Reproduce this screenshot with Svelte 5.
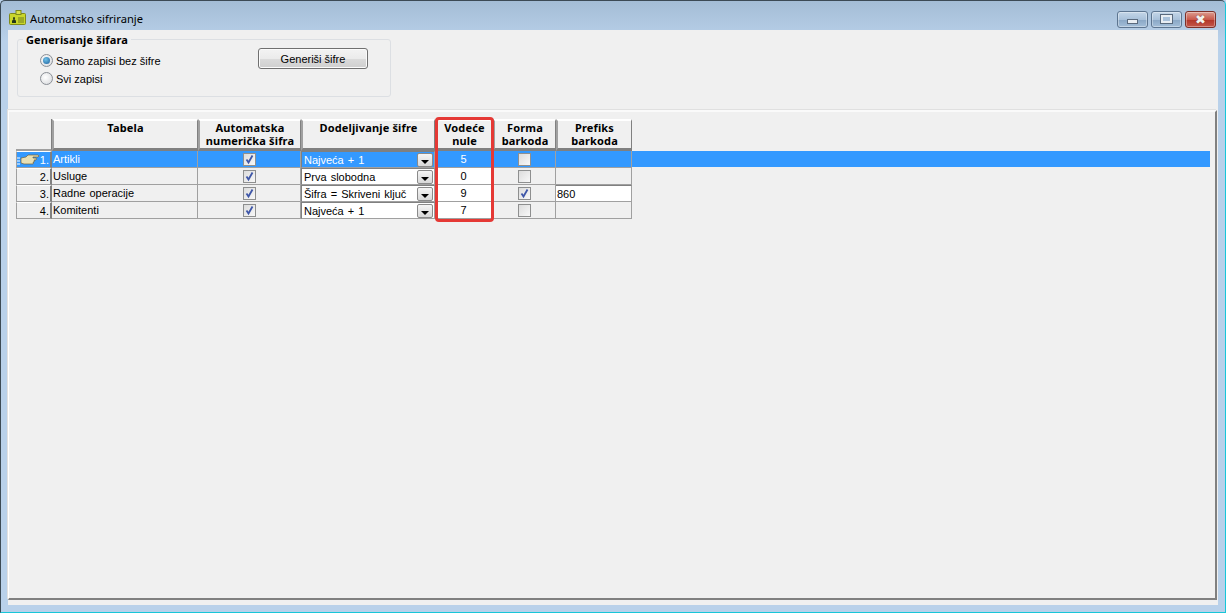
<script>
  // automatic code assignment dialog
  const rows = [
    { no: '1.', name: 'Artikli', auto: true, mode: 'Najveća + 1', zeros: 5, form: false, prefix: '', selected: true },
    { no: '2.', name: 'Usluge', auto: true, mode: 'Prva slobodna', zeros: 0, form: false, prefix: '' },
    { no: '3.', name: 'Radne operacije', auto: true, mode: 'Šifra = Skriveni ključ', zeros: 9, form: true, prefix: '860' },
    { no: '4.', name: 'Komitenti', auto: true, mode: 'Najveća + 1', zeros: 7, form: false, prefix: '' }
  ];
</script>

<div class="window">
  <div class="titlebar">
    <svg class="app-icon" width="18" height="16" viewBox="0 0 18 16">
      <rect x="0.5" y="3.5" width="16" height="11" rx="1" fill="#c9d62c" stroke="#7f8a1a"/>
      <rect x="7" y="0.5" width="5" height="4" fill="#d8e04a" stroke="#7f8a1a"/>
      <path d="M3 13 v-2 q0-1 1.500-1.500 q-1-1 0-2.500 h1 q1 1.500 0 2.500 q1.500 .5 1.500 1.500 v2z" fill="#23351a"/>
      <path d="M9 8h6M9 10h6M9 12h6" stroke="#6f7d20"/>
    </svg>
    <span class="title">Automatsko sifriranje</span>
    <div class="controls">
      <div class="ctl"><span class="min-glyph"></span></div>
      <div class="ctl"><span class="max-glyph"></span></div>
      <div class="ctl close"><span class="x-glyph">✖</span></div>
    </div>
  </div>

  <div class="body">
    <div class="top">
      <fieldset class="group">
        <legend>Generisanje šifara</legend>
        <div class="options">
          <label class="radio"><span class="dot on"></span>Samo zapisi bez šifre</label>
          <label class="radio"><span class="dot"></span>Svi zapisi</label>
        </div>
        <button class="generate">Generiši šifre</button>
      </fieldset>
    </div>

    <div class="grid-panel">
      <div class="grid">
        <div class="head corner"></div>
        <div class="head">Tabela</div>
        <div class="head">Automatska<br />numerička šifra</div>
        <div class="head">Dodeljivanje šifre</div>
        <div class="head">Vodeće<br />nule</div>
        <div class="head">Forma<br />barkoda</div>
        <div class="head">Prefiks<br />barkoda</div>

        {#each rows as row}
          <div class="cell rowhead" class:sel={row.selected}>
            {#if row.selected}
              <svg class="hand" width="24" height="14" viewBox="0 0 24 14">
                <path d="M0 5h3M0 8h3M0 11h3" stroke="#fff"/>
                <path d="M4 5 l5-1 l2-2 h10 q2 1 0 2 h-5 v1 h3 q1 1 0 2 h-2 q1 1 0 2 h-1 q1 1 0 2 h-9 l-3-1z" fill="#e8dfb4" stroke="#6e6140" stroke-width="0.7"/>
              </svg>
            {/if}
            {row.no}
          </div>
          <div class="cell text" class:sel={row.selected}>{row.name}</div>
          <div class="cell center" class:sel={row.selected}>
            <span class="check" class:checked={row.auto}>
              {#if row.auto}<svg width="11" height="11" viewBox="0 0 11 11"><path d="M2.500 5.500 L4.500 8.500 L8.500 1.500" fill="none" stroke="#3f57a8" stroke-width="1.800"/></svg>{/if}
            </span>
          </div>
          <div class="cell combo" class:sel={row.selected}>
            <span class="combo-text">{row.mode}</span>
            <span class="combo-btn"><i></i></span>
          </div>
          <div class="cell zeros" class:sel={row.selected}>{row.zeros}</div>
          <div class="cell center" class:sel={row.selected}>
            <span class="check" class:checked={row.form}>
              {#if row.form}<svg width="11" height="11" viewBox="0 0 11 11"><path d="M2.500 5.500 L4.500 8.500 L8.500 1.500" fill="none" stroke="#3f57a8" stroke-width="1.800"/></svg>{/if}
            </span>
          </div>
          <div class="cell prefix" class:sel={row.selected} class:filled={row.prefix}>{row.prefix}</div>
          {#if row.selected}<div class="sel-tail"></div>{/if}
        {/each}

        <div class="highlight"></div>
      </div>
    </div>
  </div>
</div>

<style>
  :global(body) {
    margin: 0;
    background: #b9d1ea;
  }

  .window {
    width: 1226px;
    height: 613px;
    box-sizing: border-box;
    display: flex;
    flex-direction: column;
    border: 1px solid #3c4a55;
    border-bottom-color: #17c6d8;
    border-right-color: #17c6d8;
    border-radius: 5px 5px 0 0;
    background: linear-gradient(#a4bdd6 0, #b9d1ea 40px);
    font-family: "Liberation Sans", Tahoma, sans-serif;
    font-size: 11px;
    color: #000;
  }

  .titlebar {
    height: 29px;
    flex: none;
    display: flex;
    align-items: center;
    padding-left: 8px;
  }

  .app-icon {
    margin-right: 3px;
    margin-top: 5px;
  }

  .title {
    font-family: "Noto Sans", sans-serif;
    font-size: 11.2px;
    margin-top: 6px;
  }

  .controls {
    margin-left: auto;
    margin-right: 9px;
    margin-top: 7px;
    display: flex;
    gap: 3px;
  }

  .ctl {
    width: 29px;
    height: 15px;
    border: 1px solid #5d7590;
    border-radius: 3px;
    display: flex;
    align-items: center;
    justify-content: center;
    background: linear-gradient(#c4d6e8 0, #a9c1da 50%, #8ba8c6 55%, #a3bed8 100%);
    box-shadow: inset 0 0 0 1px rgba(255, 255, 255, 0.35);
  }

  .ctl.close {
    width: 29px;
    border-color: #7c2f28;
    background: linear-gradient(#dc9d90 0, #c9594b 50%, #b3372a 55%, #c4574a 100%);
  }

  .min-glyph {
    width: 9px;
    height: 3px;
    margin-top: 5px;
    background: #e9eef3;
    border: 1px solid #5a6a7d;
  }

  .max-glyph {
    width: 7px;
    height: 4px;
    border: 2px solid #e9eef3;
    outline: 1px solid #5a6a7d;
    outline-offset: 0;
    background: #a9c1da;
  }

  .x-glyph {
    color: #f2f2ee;
    font-size: 13px;
    line-height: 1;
    font-family: "DejaVu Sans", sans-serif;
    text-shadow: 0 0 1px #6b2018;
  }

  .body {
    flex: 1;
    margin: 0 7px 7px 7px;
    display: flex;
    flex-direction: column;
    background: #f0f0f0;
    min-height: 0;
  }

  .top {
    height: 80px;
    flex: none;
    box-sizing: border-box;
    padding: 3px 0 0 9px;
  }

  .group {
    position: relative;
    width: 372px;
    height: 61px;
    box-sizing: content-box;
    margin: 1px 0 0 0;
    padding: 0;
    border: 1px solid #dcdfe3;
    border-radius: 3px;
    display: flex;
  }

  legend {
    font-weight: bold;
    margin-left: 5px;
    padding: 0 3px;
    line-height: 11px;
    font-size: 11px;
    font-family: "Noto Sans", sans-serif;
    letter-spacing: 0.15px;
  }

  .options {
    display: flex;
    flex-direction: column;
    gap: 5px;
    padding: 9px 0 0 22px;
  }

  .radio {
    display: flex;
    align-items: center;
    gap: 3px;
    height: 13px;
  }

  .dot {
    width: 11px;
    height: 11px;
    border-radius: 50%;
    border: 1px solid #8a8f96;
    background: radial-gradient(circle at 40% 40%, #fff, #d5d7da);
    position: relative;
  }

  .dot.on::after {
    content: "";
    position: absolute;
    inset: 2px;
    border-radius: 50%;
    background: radial-gradient(circle at 40% 35%, #6fc1e8, #1c5f9c);
  }

  .generate {
    position: absolute;
    left: 240px;
    top: 3px;
    width: 110px;
    height: 21px;
    padding: 0;
    border: 1px solid #707070;
    border-radius: 3px;
    background: linear-gradient(#f3f3f3 0, #ebebeb 50%, #dadada 55%, #cfcfcf 100%);
    box-shadow: inset 0 0 0 1px #fbfbfb;
    font: inherit;
    color: #000;
  }

  .grid-panel {
    flex: 1;
    min-height: 0;
    margin-bottom: 5px;
    margin-right: 1px;
    box-sizing: border-box;
    border-top: 2px solid #fafafa;
    border-left: 1px solid #fff;
    border-right: 2px solid #808080;
    border-bottom: 2px solid #808080;
    padding: 7px 0 0 7px;
    position: relative;
    box-shadow: -1px -1px 0 #e0e0e0;
  }

  .grid {
    position: relative;
    display: grid;
    grid-template-columns: 36px 146px 103px 134px 58px 63px 76px;
    grid-template-rows: 32px repeat(4, 17px);
    width: max-content;
  }

  .head {
    box-sizing: border-box;
    border-left: 2px solid #a0a0a0;
    border-top: 2px solid #fff;
    border-right: 1px solid #808080;
    border-bottom: 3px solid #808080;
    font-family: "Noto Sans", sans-serif;
    font-weight: bold;
    letter-spacing: 0.15px;
    text-align: center;
    line-height: 13px;
    padding-top: 0;
    margin-top: 0;
    background: #f0f0f0;
    overflow: hidden;
  }

  .corner {
    border: none;
    border-bottom: 2px solid #a0a0a0;
    border-right: 1px solid #808080;
  }

  .cell {
    box-sizing: border-box;
    border-right: 1px solid #a0a0a0;
    border-bottom: 1px solid #a0a0a0;
    display: flex;
    align-items: center;
    white-space: nowrap;
    position: relative;
    min-width: 0;
    word-spacing: 1px;
  }

  .cell.sel {
    background: #3399ff;
    color: #fff;
  }

  .rowhead {
    justify-content: flex-end;
    padding-right: 1px;
    background: #f0f0f0;
    border-left: 1px solid #a0a0a0;
    border-top: 1px solid #fff;
    border-right: 2px solid #808080;
  }

  .hand {
    position: absolute;
    left: 0;
    top: 1px;
  }

  .text {
    padding-left: 1px;
  }

  .center {
    justify-content: center;
  }

  .check {
    width: 11px;
    height: 11px;
    border: 1px solid #8e8f8f;
    background: linear-gradient(135deg, #dcdcdc, #f8f8f8);
    display: flex;
  }

  .combo {
    padding-left: 2px;
    background: #fff;
    border-left: 1px solid #808080;
    border-top: 1px solid #808080;
    justify-content: space-between;
  }

  .combo-text {
    line-height: 14px;
  }

  .combo-btn {
    width: 16px;
    height: 14px;
    margin-right: 1px;
    box-sizing: border-box;
    border: 1px solid #8a8a8a;
    border-radius: 2px;
    background: linear-gradient(#f5f5f5, #d8d8d8);
    display: flex;
    align-items: flex-end;
    justify-content: center;
    padding-bottom: 2px;
  }

  .combo-btn i {
    width: 0;
    height: 0;
    border-left: 4px solid transparent;
    border-right: 4px solid transparent;
    border-top: 4px solid #000;
  }

  .zeros {
    justify-content: center;
    background: #fff;
  }

  .prefix {
    padding-left: 1px;
  }

  .prefix.filled {
    background: #fff;
    border-top: 1px solid #808080;
  }

  .sel-tail {
    position: absolute;
    left: 616px;
    top: 32px;
    width: 578px;
    height: 16px;
    background: #3399ff;
  }

  .highlight {
    position: absolute;
    left: 419px;
    top: -2px;
    width: 59px;
    height: 105px;
    box-sizing: border-box;
    border: 3px solid #e53935;
    border-radius: 4px;
    pointer-events: none;
  }
</style>
